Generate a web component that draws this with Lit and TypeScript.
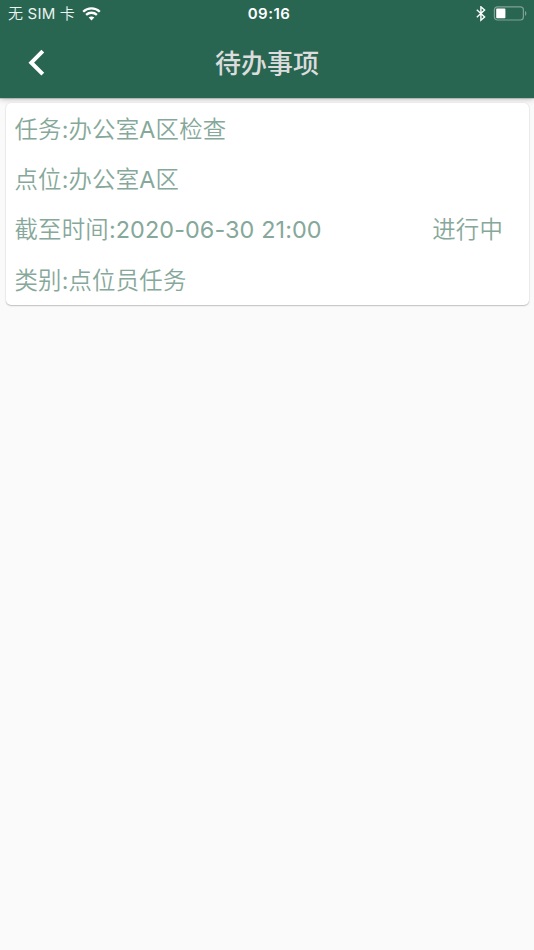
import { LitElement, html, css } from "lit";
import { customElement, property } from "lit/decorators.js";

interface Task {
  name: string;
  point: string;
  deadline: string;
  status: string;
  category: string;
}

// Latin letters and digits take a slightly heavier weight than the Chinese glyphs.
const mixed = (text: string) =>
  text
    .split(/([\x20-\x7e]+)/)
    .filter(Boolean)
    .map((part) => (/^[\x20-\x7e]/.test(part) ? html`<span class="latin">${part}</span>` : part));

@customElement("status-bar")
class StatusBar extends LitElement {
  static styles = css`
    :host {
      display: grid;
      grid-template-columns: 1fr auto 1fr;
      align-items: center;
      height: 27px;
      padding: 0 7px 0 8px;
      color: #fff;
      font-size: 15px;
      line-height: 27px;
    }
    .left { display: flex; align-items: center; color: #edf3f0; font-weight: 350; }
    .latin { font-weight: 400; }
    .carrier { letter-spacing: 0.2px; white-space: pre; }
    .wifi { margin-left: 7px; }
    .time { padding-left: 3px; font-weight: 600; font-size: 15px; letter-spacing: 0.5px; }
    .right { display: flex; align-items: center; justify-content: flex-end; gap: 7px; }
    svg { display: block; }
  `;
  render() {
    return html`
      <div class="left">
        <span class="carrier">${mixed("无 SIM 卡")}</span>
        <svg class="wifi" width="19" height="14" viewBox="0 0 19 14" fill="none" stroke="#fff" stroke-width="2.3">
          <path d="M1.2 4.7C5.8 .2 13.2 .2 17.8 4.7" />
          <path d="M4.1 7.9c3-2.9 7.8-2.9 10.8 0" />
          <path d="M9.5 13.4 6.7 10.6c1.6-1.4 4-1.4 5.6 0z" fill="#fff" stroke="none" />
        </svg>
      </div>
      <span class="time">09:16</span>
      <div class="right">
        <svg width="10" height="16" viewBox="0 0 10 16" fill="none" stroke="#fff" stroke-width="1.4">
          <path d="M.8 3.8 8.6 10.9 4.9 14.2V.8L8.6 4.1.8 11.2" />
        </svg>
        <svg width="34" height="16" viewBox="0 0 34 16">
          <rect x="1.4" y=".8" width="29" height="13.2" rx="3" fill="none" stroke="#7fa294" stroke-width="1.2" />
          <rect x="3.2" y="2.6" width="9.2" height="9.6" rx=".8" fill="#fff" />
          <path d="M32 4.9c1.8.6 1.8 4.2 0 4.8z" fill="#7fa294" />
        </svg>
      </div>
    `;
  }
}

@customElement("nav-bar")
class NavBar extends LitElement {
  @property() heading = "";
  static styles = css`
    :host {
      display: grid;
      grid-template-columns: 74px 1fr 74px;
      align-items: center;
      height: 71.3px;
    }
    .back { padding-left: 28px; }
    svg { display: block; }
    .title {
      padding-top: 2px;
      text-align: center;
      color: #dcdcdc;
      font-size: 26px;
      font-weight: 500;
      line-height: 36px;
    }
  `;
  render() {
    return html`
      <div class="back">
        <svg width="18" height="28" viewBox="0 0 18 28" fill="none" stroke="#fff" stroke-width="4">
          <path d="M14.8 2.2 3.3 13.7l11.5 11.5" />
        </svg>
      </div>
      <div class="title">${this.heading}</div>
    `;
  }
}

@customElement("task-card")
class TaskCard extends LitElement {
  @property({ attribute: false }) task!: Task;
  static styles = css`
    :host {
      display: block;
      margin: 5.2px 5.5px 0;
      padding: 1.5px 25.5px 0 9px;
      height: 201.5px;
      box-sizing: border-box;
      background: #fff;
      border-radius: 5px;
      box-shadow: 0 1px 1.5px rgba(0, 0, 0, 0.22), 0 0 1.5px rgba(0, 0, 0, 0.12);
      color: #86a89a;
      font-size: 23.4px;
      font-weight: 350;
      letter-spacing: 0.2px;
    }
    .row {
      display: flex;
      justify-content: space-between;
      height: 50.2px;
      line-height: 50.2px;
      white-space: pre;
    }
    .latin { font-weight: 400; letter-spacing: 0.1px; }
  `;
  render() {
    const t = this.task;
    return html`
      <div class="row"><span>${mixed("任务:" + t.name)}</span></div>
      <div class="row"><span>${mixed("点位:" + t.point)}</span></div>
      <div class="row"><span>${mixed("截至时间:" + t.deadline)}</span><span>${t.status}</span></div>
      <div class="row"><span>${mixed("类别:" + t.category)}</span></div>
    `;
  }
}

@customElement("app-root")
class AppRoot extends LitElement {
  static styles = css`
    :host {
      display: flex;
      flex-direction: column;
      height: 100vh;
      background: #fafafa;
      font-family: Inter, "Noto Sans CJK SC", sans-serif;
    }
    header {
      background: #286652;
      box-shadow: 0 1px 6px rgba(0, 0, 0, 0.26), 0 0.5px 0.5px rgba(0, 0, 0, 0.15);
    }
  `;
  private tasks: Task[] = [
    { name: "办公室A区检查", point: "办公室A区", deadline: "2020-06-30 21:00", status: "进行中", category: "点位员任务" },
  ];
  render() {
    return html`
      <header>
        <status-bar></status-bar>
        <nav-bar heading="待办事项"></nav-bar>
      </header>
      <main>${this.tasks.map((t) => html`<task-card .task=${t}></task-card>`)}</main>
    `;
  }
}
